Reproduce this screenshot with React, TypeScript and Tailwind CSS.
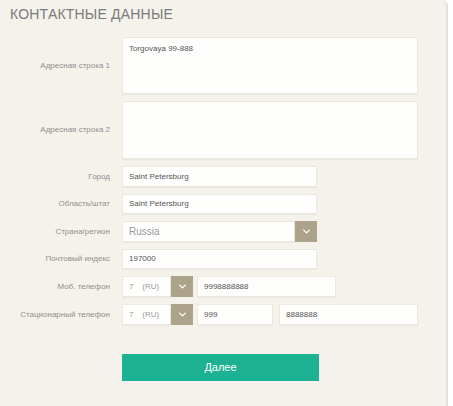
import { ChevronDown } from "lucide-react";

const labelCls = "text-right text-[8px] text-[#909090] self-center";
const boxCls = "bg-[#fefefd] border border-[#ebe8df] shadow-[0_1px_1px_rgba(0,0,0,0.04)]";

const SelectBtn = () => (
    <div className="w-[22px] h-full bg-[#ada38a] flex items-center justify-center text-white">
        <ChevronDown size={11} strokeWidth={3} />
    </div>
);

const Input = ({ value, className = "" }: { value?: string; className?: string }) => (
    <div className={`${boxCls} h-full flex items-center pl-[6px] text-[8px] text-[#555] ${className}`}>
        {value}
    </div>
);

export default function App() {
    return (
        <div className="w-[453px] h-[406px] bg-white overflow-hidden font-['Liberation_Sans',Arial,sans-serif]">
            <div className="w-[448px] h-[406px] bg-[#f4f2eb] rounded-tr-[6px] border-r-2 border-[#e3e1dc] pt-[4px]">
                <h1 className="pl-[10px] text-[14px] leading-[21px] text-[#7b7b7b] tracking-[0.2px]">
                    КОНТАКТНЫЕ ДАННЫЕ
                </h1>

                <div className="grid grid-cols-[110px_1fr] gap-x-[12px] gap-y-[7px] mt-[12px] pr-[28px]">
                    <span className={labelCls}>Адресная строка 1</span>
                    <div className={`${boxCls} h-[57px] px-[6px] pt-[5px] text-[8px] text-[#555]`}>
                        Torgovaya 99-888
                    </div>

                    <span className={labelCls}>Адресная строка 2</span>
                    <div className={`${boxCls} h-[58px]`} />

                    <span className={labelCls}>Город</span>
                    <div className="h-[21px] w-[195px]">
                        <Input value="Saint Petersburg" />
                    </div>

                    <span className={labelCls}>Область/штат</span>
                    <div className="h-[20px] w-[195px]">
                        <Input value="Saint Petersburg" />
                    </div>

                    <span className={labelCls}>Страна/регион</span>
                    <div className="h-[21px] w-[195px] flex">
                        <div className={`${boxCls} flex-1 flex items-center pl-[6px] text-[10px] text-[#9a9a9a]`}>
                            Russia
                        </div>
                        <SelectBtn />
                    </div>

                    <span className={labelCls}>Почтовый индекс</span>
                    <div className="h-[20px] w-[195px]">
                        <Input value="197000" />
                    </div>

                    <span className={labelCls}>Моб. телефон</span>
                    <div className="h-[21px] flex">
                        <div className={`${boxCls} w-[49px] flex items-center pl-[6px] text-[8px] text-[#9a9a9a]`}>
                            7&nbsp;&nbsp;&nbsp;&nbsp;(RU)
                        </div>
                        <SelectBtn />
                        <div className="ml-[4px] w-[139px]">
                            <Input value="9998888888" />
                        </div>
                    </div>

                    <span className={labelCls}>Стационарный телефон</span>
                    <div className="h-[21px] flex">
                        <div className={`${boxCls} w-[49px] flex items-center pl-[6px] text-[8px] text-[#9a9a9a]`}>
                            7&nbsp;&nbsp;&nbsp;&nbsp;(RU)
                        </div>
                        <SelectBtn />
                        <div className="ml-[4px] w-[76px]">
                            <Input value="999" />
                        </div>
                        <div className="ml-[6px] flex-1">
                            <Input value="8888888" />
                        </div>
                    </div>

                    <span />
                    <button className="mt-[22px] w-[197px] h-[27px] bg-[#1bb192] text-white text-[11px]">
                        Далее
                    </button>
                </div>
            </div>
        </div>
    );
}
